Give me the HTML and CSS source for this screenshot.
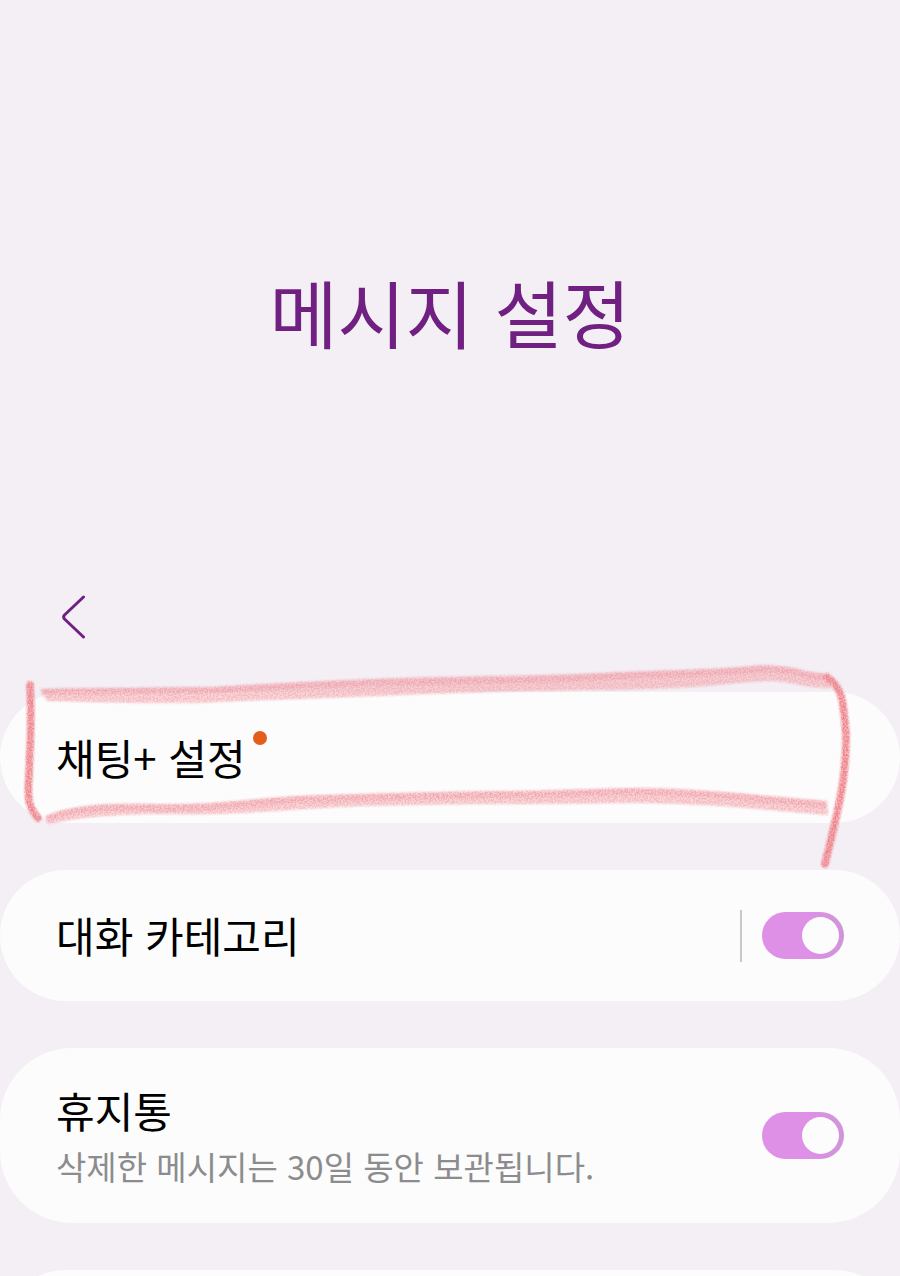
FILE: index.html
```html
<!DOCTYPE html>
<html lang="ko">
<head>
  <meta charset="UTF-8">
  <title>메시지 설정</title>
  <meta name="viewport" content="width=device-width, initial-scale=1.0">
  <link rel="stylesheet" href="styles.css">
</head>
<body>

<header class="header">
  <h1>메시지 설정</h1>
  <button class="back" type="button" aria-label="뒤로">
    <svg width="24" height="44" viewBox="0 0 24 44">
      <path d="M21.500 2 L2.500 20 Q0.800 22 2.500 24 L21.500 42"/>
    </svg>
  </button>
</header>

<main class="list">
  <section class="card marked">
    <a class="label" href="#chat">채팅+ 설정<span class="dot"></span></a>

    <!-- crayon mark around the row -->
    <svg class="mark" viewBox="0 650 900 230" aria-hidden="true">
      <defs>
        <filter id="grain" filterUnits="userSpaceOnUse" x="0" y="650" width="900" height="230">
          <feTurbulence type="fractalNoise" baseFrequency="0.6" numOctaves="2" seed="4" result="noise"/>
          <feColorMatrix in="noise" type="matrix" values="0 0 0 0 0  0 0 0 0 0  0 0 0 0 0  3 0 0 0 -1" result="speck"/>
          <feGaussianBlur in="SourceGraphic" stdDeviation="1" result="soft"/>
          <feComposite in="soft" in2="speck" operator="in" result="dots"/>
          <feComponentTransfer in="soft" result="base">
            <feFuncA type="linear" slope="0.6"/>
          </feComponentTransfer>
          <feMerge>
            <feMergeNode in="base"/>
            <feMergeNode in="dots"/>
          </feMerge>
        </filter>
      </defs>
      <g filter="url(#grain)">
        <path class="wide" d="M40 689 C80 688 160 688 215 687 C290 683 340 680 400 678 S540 676 600 673 S700 670 740 667 C765 663 790 666 806 671 L826 674 L831 688 C805 688 790 681 770 681 S710 686 690 687 S630 690 600 690 S470 692 400 695 S260 700 215 702 S100 702 47 701 Z"/>
        <path class="edge" d="M42 692 C80 691 160 691 215 690 C290 686 340 683 400 682 S540 680 600 677 S700 674 740 671 C765 667 790 670 806 675 L826 678"/>
        <path class="wide" d="M45 817 C60 809 85 805 110 804 S170 805 210 803 C250 800 280 796 320 795 S450 791 500 791 S600 788 640 788 S740 793 770 796 L827 801 L828 815 L770 810 C730 806 680 803 640 803 S550 804 500 804 S370 805 320 808 S250 813 210 814 S160 813 120 815 S70 820 48 824 Z"/>
        <path class="edge" d="M47 819 C60 812 85 809 110 808 S170 809 210 807 C250 804 280 800 320 799 S450 795 500 795 S600 792 640 792 S740 797 770 800 L826 805"/>
        <path class="side" d="M30 685 C32 715 30 750 29 775 C27 800 29 808 38 818"/>
        <path class="side" d="M827 677 C843 689 843 699 846 735 C846 782 839 806 825 864"/>
      </g>
    </svg>
  </section>

  <section class="card">
    <label class="label" for="category">대화 카테고리</label>
    <span class="divider"></span>
    <input class="switch" type="checkbox" role="switch" id="category" checked>
  </section>

  <section class="card tall">
    <label class="label" for="trash">휴지통
      <small>삭제한 메시지는 30일 동안 보관됩니다.</small>
    </label>
    <input class="switch" type="checkbox" role="switch" id="trash" checked>
  </section>

  <section class="card"></section>
</main>

</body>
</html>
```

FILE: styles.css
```css
* {
  box-sizing: border-box;
}

html {
  height: 100%;
}

body {
  margin: 0;
  height: 100%;
  overflow-x: hidden;
  overflow-y: auto;
  scrollbar-width: none;
  background: #f3eff5;
  color: #000;
  font-family: "Noto Sans CJK KR", sans-serif;
}

.header {
  padding: 259px 48px 43px;
}

h1 {
  margin: 0 0 222px;
  color: #702080;
  font-size: 74px;
  font-weight: 400;
  line-height: 104px;
  text-align: center;
}

.back {
  display: flex;
  padding: 10px 14px;
  border: none;
  background: none;
  cursor: pointer;
}

.back svg {
  fill: none;
  stroke: #702080;
  stroke-width: 3;
  stroke-linecap: round;
  stroke-linejoin: round;
}

.list {
  display: flex;
  flex-direction: column;
  gap: 47px;
}

.card {
  display: flex;
  flex-shrink: 0;
  align-items: center;
  min-height: 131px;
  padding: 30px 56px;
  border-radius: 66px;
  background: #fcfcfc;
}

.tall {
  min-height: 175px;
  border-radius: 72px;
}

.label {
  flex: 1;
  padding-bottom: 2px;
  color: #000;
  font-size: 42px;
  line-height: 60px;
  text-decoration: none;
}

.label small {
  display: block;
  margin-top: 2px;
  color: #8c8c8e;
  font-size: 33px;
  line-height: 48px;
}

.dot {
  display: inline-block;
  width: 14px;
  height: 14px;
  margin-left: 7px;
  border-radius: 50%;
  background: #e35d1b;
  vertical-align: 30px;
}

.divider {
  width: 2px;
  height: 52px;
  margin-right: 20px;
  background: #c8c8c8;
}

.switch {
  appearance: none;
  display: flex;
  justify-content: flex-end;
  width: 82px;
  height: 47px;
  margin: 0;
  padding: 5px;
  border-radius: 24px;
  background: linear-gradient(90deg, #dd90e5 60%, #cf95d8);
  cursor: pointer;
}

.switch::before {
  content: "";
  width: 37px;
  height: 37px;
  border-radius: 50%;
  background: #fcfcfc;
}

.switch:not(:checked) {
  justify-content: flex-start;
  background: #c8c8c8;
}

.marked {
  position: relative;
}

.mark {
  position: absolute;
  top: -42px;
  left: 0;
  width: 100%;
  pointer-events: none;
}

.wide {
  fill: #f4a9b1;
  opacity: 0.7;
}

.edge {
  fill: none;
  stroke: #ee98a0;
  stroke-width: 6;
  opacity: 0.5;
}

.side {
  fill: none;
  stroke: #ee8088;
  stroke-width: 7;
  stroke-linecap: round;
}
```
